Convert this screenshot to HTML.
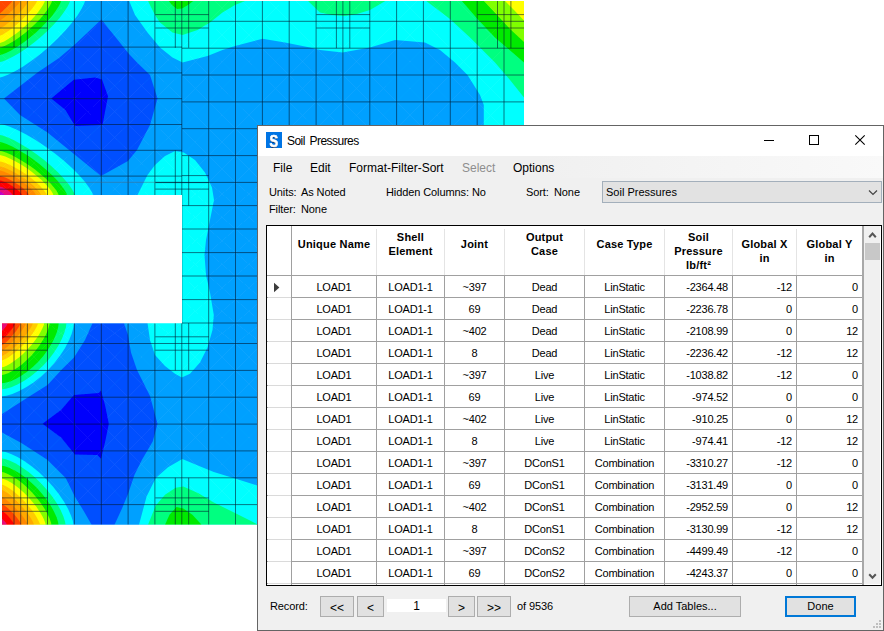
<!DOCTYPE html>
<html><head><meta charset="utf-8"><title>Soil Pressures</title>
<style>
html,body{margin:0;padding:0;background:#fff;}
body{width:884px;height:631px;position:relative;overflow:hidden;font-family:"Liberation Sans",sans-serif;color:#000;}
#dlg{position:absolute;left:257px;top:125px;width:625px;height:504px;border:1px solid #646464;background:#f0f0f0;}
#dlg *{box-sizing:border-box;}
#title{position:absolute;left:0;top:0;width:625px;height:30px;background:#fff;}
#icon{position:absolute;left:8px;top:6px;width:16px;height:16px;background:#0074e4;overflow:hidden;}
#icon span{position:absolute;left:0;top:1px;width:16px;height:18px;color:#fff;font-weight:bold;font-size:17px;line-height:18px;text-align:center;text-shadow:0 1.4px 0 #001a44;-webkit-text-stroke:0.7px #fff;transform:scaleX(0.76);transform-origin:7.4px 0;}
#ttext{position:absolute;left:29px;top:8px;font-size:12px;line-height:14px;letter-spacing:-0.55px;word-spacing:2px;white-space:nowrap;}
.wb{position:absolute;top:0;}
#menu{position:absolute;left:0;top:30px;width:625px;height:22px;background:linear-gradient(to right,#f0f0f0 0%,#f0f0f0 45%,#f9f9f9 100%);}
#menu span{position:absolute;top:5px;font-size:12px;line-height:14px;letter-spacing:0;white-space:nowrap;}
.lb{position:absolute;font-size:11px;line-height:13px;white-space:nowrap;letter-spacing:-0.1px;}
#combo{position:absolute;left:344px;top:55px;width:280px;height:22px;border:1px solid #a3afbb;background:#e2e2e2;}
#combo span{position:absolute;left:3px;top:4px;font-size:11px;line-height:13px;}
#tbl{position:absolute;left:8px;top:99px;width:616px;height:361px;border:1px solid #000;background:#fff;overflow:hidden;}
#tbl .hc{position:absolute;top:0;height:49px;text-align:center;font-weight:bold;font-size:11px;line-height:14px;letter-spacing:0.2px;}
#tbl .hv{position:absolute;top:3px;width:1px;height:46px;background:#e4e4e4;}
#tbl .v{position:absolute;top:49px;width:1px;height:310px;background:#a0a0a0;}
#tbl .v0{position:absolute;top:0;width:1px;height:359px;background:#a0a0a0;}
#tbl .hl{position:absolute;left:0;width:595px;height:1px;background:#a0a0a0;}
#tbl .hl2{position:absolute;left:1px;width:23px;height:1px;background:#dadada;}
#tbl .c{position:absolute;height:21px;font-size:11px;line-height:21px;white-space:nowrap;padding-top:1px;letter-spacing:-0.2px;}
#tbl .center{text-align:center;}
#tbl .right{text-align:right;padding-right:4px;}
#arrow{position:absolute;left:0;top:0;}
#sb{position:absolute;left:595px;top:0;width:19px;height:359px;background:#f0f0f0;border-left:2px solid #a8a8a8;}
.btn{position:absolute;height:21px;border:1px solid #adadad;background:#e1e1e1;font-size:11px;line-height:19px;text-align:center;}
.nav{font-size:12px;line-height:22px;}
</style></head><body>
<svg width="884" height="631" viewBox="0 0 884 631" style="position:absolute;left:0;top:0">
<defs><clipPath id="pc"><path d="M0,1 H524 V524.7 H2 V323.3 H182 V195 H0 Z"/></clipPath><filter id="bl" x="0" y="0" width="100%" height="100%" filterUnits="userSpaceOnUse"><feGaussianBlur stdDeviation="0.45"/></filter></defs>
<g clip-path="url(#pc)" filter="url(#bl)">
<rect x="0" y="0" width="530" height="530" fill="#00a0ff"/>
<polygon fill="#00ffff" points="0.0,1.0 85.0,1.0 84.2,3.6 81.7,8.6 77.8,14.9 72.4,22.2 65.8,30.0 58.2,38.0 49.9,45.9 41.1,53.4 32.2,60.2 23.5,66.2 15.5,71.0 8.4,74.6 2.9,76.8 0.0,77.5"/>
<polygon fill="#00ffff" points="0.0,195.0 93.0,195.0 92.1,192.5 89.4,187.9 85.1,182.0 79.2,175.3 72.0,168.0 63.7,160.6 54.6,153.2 45.0,146.2 35.2,139.8 25.7,134.3 16.9,129.8 9.2,126.5 3.2,124.4 0.0,123.8"/>
<polygon fill="#00ffff" points="2.0,323.3 74.0,323.3 73.4,327.6 71.7,333.8 68.8,340.8 64.9,348.2 60.1,355.6 54.4,363.0 48.0,370.0 41.1,376.4 33.9,382.2 26.5,387.1 19.2,391.1 12.4,393.9 6.3,395.7 2.0,396.3"/>
<polygon fill="#00ffff" points="2.0,524.7 73.5,524.7 72.9,521.1 71.0,515.5 68.0,508.8 63.9,501.5 58.8,494.0 52.9,486.5 46.3,479.3 39.3,472.5 31.9,466.4 24.6,461.2 17.5,457.0 11.0,453.9 5.5,452.0 2.0,451.4"/>
<polygon fill="#00ffff" points="128.8,0.0 135.0,15.0 147.5,32.5 160.0,47.5 172.5,57.5 182.5,62.5 207.5,56.0 222.5,50.0 235.0,46.0 262.5,38.8 285.0,42.5 310.0,47.5 320.0,50.0 342.5,52.5 370.0,47.5 395.0,40.0 425.0,42.5 440.0,50.0 455.0,62.5 467.5,75.0 480.0,95.0 483.8,105.0 483.8,135.0 524.0,135.0 524.0,0.0"/>
<polygon fill="#00ffff" points="137.5,195.0 147.5,175.0 155.0,165.0 165.0,156.0 175.0,151.0 183.8,152.5 195.0,160.0 205.0,172.5 212.0,187.5 214.0,200.0 210.0,220.0 206.0,240.0 204.5,255.0 206.0,275.0 210.0,292.5 213.8,315.0 212.5,330.0 207.5,347.5 200.0,362.5 190.0,373.8 181.8,377.5 175.0,373.8 165.0,366.0 155.0,355.0 150.0,340.0 147.5,323.0 147.5,300.0 137.5,220.0"/>
<polygon fill="#00ffff" points="139.0,524.7 146.6,496.4 155.8,478.0 168.0,467.3 182.3,459.0 198.5,465.8 213.8,472.0 238.2,479.6 258.0,485.7 270.0,489.0 270.0,524.7"/>
<polygon fill="#00ff80" points="0.0,1.0 70.0,1.0 69.3,3.1 67.3,7.0 64.0,12.1 59.6,17.9 54.2,24.1 47.9,30.5 41.1,36.8 33.8,42.8 26.5,48.2 19.4,53.0 12.7,56.8 6.9,59.7 2.4,61.4 0.0,62.0"/>
<polygon fill="#00ff80" points="0.0,195.0 74.8,195.0 74.1,192.9 71.9,189.1 68.4,184.1 63.7,178.4 57.9,172.3 51.2,166.0 43.9,159.8 36.2,153.9 28.3,148.6 20.7,143.9 13.6,140.1 7.4,137.3 2.6,135.6 0.0,135.0"/>
<polygon fill="#00ff80" points="2.0,323.3 66.4,323.3 65.9,327.2 64.3,332.8 61.8,339.1 58.3,345.8 54.0,352.5 48.9,359.2 43.2,365.5 37.0,371.3 30.5,376.5 23.9,381.0 17.4,384.6 11.3,387.2 5.8,388.8 2.0,389.3"/>
<polygon fill="#00ff80" points="2.0,524.7 65.6,524.7 65.0,521.5 63.4,516.4 60.7,510.3 57.1,503.8 52.6,497.0 47.3,490.2 41.4,483.7 35.1,477.6 28.6,472.1 22.1,467.4 15.8,463.6 10.0,460.8 5.1,459.1 2.0,458.5"/>
<polygon fill="#00ff80" points="147.5,0.0 155.0,15.0 160.0,22.5 172.5,32.5 182.5,35.0 197.5,30.0 210.0,22.5 222.5,12.5 235.0,5.0 247.5,0.0"/>
<polygon fill="#00ff80" points="307.0,0.0 320.0,12.5 332.0,15.0 345.0,16.0 357.0,14.0 370.0,10.0 387.0,0.0"/>
<polygon fill="#00ff80" points="425.0,0.0 450.0,19.0 470.0,37.5 495.0,62.5 510.0,80.0 524.0,97.5 524.0,0.0"/>
<polygon fill="#00ff80" points="148.0,524.7 155.8,505.5 165.0,494.8 175.6,487.8 183.3,486.6 198.5,493.3 213.8,502.5 232.0,511.6 250.5,520.8 258.0,524.7"/>
<polygon fill="#00ea00" points="0.0,1.0 61.0,1.0 60.4,2.9 58.7,6.3 55.8,10.8 52.0,15.9 47.2,21.5 41.8,27.1 35.8,32.7 29.5,38.0 23.1,42.8 16.9,47.0 11.1,50.4 6.0,52.9 2.1,54.5 0.0,55.0"/>
<polygon fill="#00ea00" points="0.0,195.0 67.0,195.0 66.4,193.2 64.4,189.7 61.3,185.4 57.1,180.3 51.9,174.9 45.9,169.4 39.3,163.9 32.4,158.7 25.4,154.0 18.5,149.9 12.2,146.5 6.6,144.0 2.3,142.5 0.0,142.0"/>
<polygon fill="#00ea00" points="2.0,323.3 58.7,323.3 58.2,326.9 56.9,331.9 54.6,337.7 51.6,343.7 47.7,349.9 43.3,355.9 38.3,361.7 32.8,367.0 27.1,371.7 21.3,375.7 15.6,379.0 10.2,381.4 5.4,382.8 2.0,383.3"/>
<polygon fill="#00ea00" points="2.0,524.7 58.5,524.7 58.0,521.8 56.6,517.3 54.2,511.9 50.9,506.1 46.9,500.0 42.2,493.9 37.0,488.1 31.4,482.7 25.7,477.8 19.9,473.6 14.3,470.2 9.1,467.7 4.8,466.2 2.0,465.7"/>
<polygon fill="#00ea00" points="168.0,0.0 172.0,5.0 177.0,9.0 182.0,8.5 188.0,5.0 194.5,0.0"/>
<polygon fill="#00ea00" points="461.0,0.0 477.5,19.0 495.0,37.5 512.5,52.5 524.0,62.5 524.0,0.0"/>
<polygon fill="#00ea00" points="165.0,524.7 169.5,514.7 176.5,507.0 183.3,508.6 192.4,514.7 201.6,524.7"/>
<polygon fill="#80ff00" points="0.0,1.0 52.0,1.0 51.5,2.6 50.0,5.6 47.6,9.5 44.3,13.9 40.3,18.7 35.6,23.5 30.5,28.3 25.1,32.9 19.7,37.1 14.4,40.7 9.5,43.6 5.2,45.8 1.8,47.1 0.0,47.6"/>
<polygon fill="#80ff00" points="0.0,195.0 58.6,195.0 58.0,193.5 56.4,190.6 53.6,187.0 49.9,182.8 45.4,178.3 40.1,173.7 34.4,169.1 28.3,164.8 22.2,160.9 16.2,157.4 10.7,154.6 5.8,152.6 2.0,151.3 0.0,150.9"/>
<polygon fill="#80ff00" points="2.0,323.3 49.6,323.3 49.2,325.8 48.0,329.8 46.0,334.5 43.2,339.6 39.8,345.0 35.9,350.2 31.5,355.4 26.8,360.1 21.9,364.4 17.0,368.1 12.3,371.0 8.0,373.2 4.3,374.6 2.0,375.0"/>
<polygon fill="#80ff00" points="2.0,524.7 51.4,524.7 51.0,522.4 49.6,518.5 47.5,513.9 44.6,508.7 40.9,503.3 36.8,497.9 32.1,492.6 27.2,487.6 22.1,483.1 17.0,479.3 12.1,476.2 7.8,473.9 4.2,472.5 2.0,472.0"/>
<polygon fill="#80ff00" points="483.0,0.0 497.0,15.0 510.0,29.0 524.0,42.0 524.0,0.0"/>
<polygon fill="#ffff00" points="0.0,1.0 44.8,1.0 44.4,2.3 43.0,4.9 40.9,8.3 38.0,12.3 34.5,16.5 30.4,21.0 26.0,25.3 21.3,29.5 16.6,33.3 12.0,36.6 7.8,39.3 4.2,41.4 1.4,42.6 0.0,43.0"/>
<polygon fill="#ffff00" points="0.0,195.0 53.3,195.0 52.8,193.6 51.3,191.0 48.8,187.7 45.4,183.9 41.3,179.8 36.5,175.7 31.3,171.5 25.8,167.6 20.2,164.0 14.8,160.9 9.7,158.4 5.3,156.5 1.8,155.4 0.0,155.0"/>
<polygon fill="#ffff00" points="2.0,323.3 44.2,323.3 43.8,325.0 42.6,328.0 40.7,331.8 38.2,336.1 35.0,340.6 31.3,345.2 27.3,349.6 23.0,353.9 18.6,357.7 14.2,361.0 10.2,363.7 6.6,365.7 3.6,366.9 2.0,367.3"/>
<polygon fill="#ffff00" points="2.0,524.7 45.7,524.7 45.3,522.9 44.1,519.7 42.1,515.7 39.4,511.3 36.2,506.6 32.3,501.8 28.2,497.1 23.7,492.6 19.2,488.6 14.7,485.1 10.5,482.3 6.7,480.2 3.7,478.9 2.0,478.5"/>
<polygon fill="#ffff00" points="504.0,0.0 514.0,10.0 524.0,20.5 524.0,0.0"/>
<polygon fill="#ffcc00" points="0.0,1.0 37.0,1.0 36.6,2.0 35.5,4.0 33.7,6.6 31.2,9.8 28.2,13.3 24.7,17.0 21.0,20.7 17.1,24.2 13.1,27.4 9.4,30.2 6.0,32.6 3.2,34.3 1.0,35.3 0.0,35.7"/>
<polygon fill="#ffcc00" points="0.0,195.0 46.8,195.0 46.3,193.8 45.0,191.7 42.8,188.9 39.9,185.7 36.2,182.3 32.0,178.8 27.5,175.3 22.6,172.1 17.7,169.1 13.0,166.5 8.5,164.3 4.6,162.8 1.6,161.8 0.0,161.5"/>
<polygon fill="#ffcc00" points="2.0,323.3 38.0,323.3 37.7,324.6 36.6,327.0 34.9,330.0 32.7,333.5 29.9,337.3 26.7,341.2 23.1,345.0 19.4,348.6 15.6,351.9 12.0,354.8 8.5,357.2 5.6,358.9 3.2,359.9 2.0,360.3"/>
<polygon fill="#ffcc00" points="2.0,524.7 40.0,524.7 39.6,523.3 38.5,520.7 36.8,517.4 34.4,513.6 31.4,509.5 28.0,505.4 24.3,501.2 20.4,497.3 16.4,493.7 12.5,490.6 8.9,488.1 5.8,486.2 3.3,485.1 2.0,484.7"/>
<polygon fill="#ffa800" points="0.0,1.0 28.5,1.0 28.2,1.7 27.3,3.2 25.8,5.2 23.9,7.7 21.5,10.4 18.8,13.3 15.8,16.3 12.8,19.1 9.8,21.7 6.9,24.0 4.4,25.9 2.2,27.3 0.7,28.2 0.0,28.5"/>
<polygon fill="#ffa800" points="0.0,195.0 41.0,195.0 40.6,194.0 39.4,192.2 37.5,189.8 34.9,187.1 31.7,184.2 28.1,181.2 24.1,178.3 19.8,175.5 15.5,172.9 11.3,170.7 7.5,168.9 4.1,167.6 1.4,166.8 0.0,166.5"/>
<polygon fill="#ffa800" points="2.0,323.3 32.8,323.3 32.5,324.3 31.6,326.2 30.1,328.8 28.1,331.9 25.6,335.2 22.8,338.6 19.7,342.0 16.5,345.3 13.2,348.3 10.1,350.9 7.2,353.0 4.8,354.6 2.9,355.6 2.0,355.9"/>
<polygon fill="#ffa800" points="2.0,524.7 34.0,524.7 33.7,523.7 32.7,521.6 31.2,518.8 29.1,515.6 26.5,512.1 23.6,508.4 20.4,504.8 17.0,501.3 13.7,498.1 10.4,495.3 7.4,493.1 4.9,491.4 3.0,490.3 2.0,490.0"/>
<polygon fill="#ff8800" points="0.0,1.0 20.5,1.0 20.3,1.4 19.6,2.3 18.5,3.7 17.0,5.4 15.2,7.3 13.2,9.4 11.0,11.5 8.8,13.6 6.6,15.5 4.6,17.2 2.8,18.6 1.4,19.6 0.4,20.3 0.0,20.5"/>
<polygon fill="#ff8800" points="0.0,195.0 35.8,195.0 35.5,194.2 34.4,192.6 32.8,190.6 30.5,188.2 27.7,185.8 24.5,183.2 21.0,180.7 17.3,178.3 13.6,176.1 9.9,174.2 6.5,172.7 3.5,171.5 1.2,170.8 0.0,170.6"/>
<polygon fill="#ff8800" points="2.0,323.3 26.0,323.3 25.7,324.0 25.0,325.5 23.8,327.6 22.2,330.1 20.2,332.8 17.9,335.7 15.5,338.6 12.9,341.3 10.4,343.9 8.0,346.2 5.8,348.0 4.0,349.4 2.6,350.2 2.0,350.5"/>
<polygon fill="#ff8800" points="2.0,524.7 27.8,524.7 27.5,524.0 26.7,522.4 25.4,520.3 23.7,517.8 21.6,515.0 19.1,512.1 16.5,509.2 13.7,506.3 11.0,503.7 8.4,501.4 6.1,499.5 4.1,498.1 2.7,497.3 2.0,497.0"/>
<polygon fill="#ff4400" points="0.0,1.0 12.4,1.0 12.3,1.2 11.8,1.7 11.1,2.5 10.2,3.5 9.0,4.7 7.8,6.0 6.4,7.4 5.0,8.8 3.7,10.0 2.5,11.2 1.5,12.1 0.7,12.8 0.2,13.3 0.0,13.4"/>
<polygon fill="#ff4400" points="0.0,195.0 29.0,195.0 28.7,194.3 27.9,193.1 26.5,191.5 24.7,189.7 22.5,187.8 19.9,185.8 17.0,183.9 14.0,182.0 11.0,180.3 8.0,178.8 5.3,177.6 2.9,176.7 1.0,176.2 0.0,176.0"/>
<polygon fill="#ff4400" points="2.0,323.3 20.6,323.3 20.4,323.9 19.8,325.1 18.9,326.8 17.6,328.7 16.1,331.0 14.3,333.3 12.4,335.6 10.5,337.8 8.5,339.9 6.6,341.7 4.9,343.2 3.5,344.3 2.5,345.0 2.0,345.2"/>
<polygon fill="#ff4400" points="2.0,524.7 21.4,524.7 21.2,524.2 20.6,523.0 19.6,521.4 18.3,519.6 16.7,517.5 14.9,515.3 12.9,513.1 10.8,511.0 8.8,509.0 6.8,507.3 5.1,505.9 3.6,504.9 2.5,504.2 2.0,504.0"/>
<polygon fill="#ff0000" points="0.0,195.0 22.0,195.0 21.8,194.5 21.2,193.6 20.1,192.4 18.7,191.0 17.0,189.5 15.1,188.0 12.9,186.5 10.6,185.1 8.3,183.8 6.1,182.6 4.0,181.7 2.2,181.1 0.8,180.6 0.0,180.5"/>
<polygon fill="#ff0000" points="2.0,323.3 15.3,323.3 15.2,323.7 14.7,324.6 14.1,325.8 13.2,327.2 12.1,328.8 10.8,330.5 9.5,332.2 8.1,333.8 6.6,335.3 5.3,336.6 4.1,337.7 3.1,338.4 2.3,338.9 2.0,339.1"/>
<polygon fill="#ff0000" points="2.0,524.7 14.3,524.7 14.2,524.3 13.8,523.6 13.2,522.5 12.3,521.3 11.3,519.9 10.2,518.5 8.9,517.0 7.6,515.6 6.3,514.3 5.1,513.2 3.9,512.3 3.0,511.6 2.3,511.1 2.0,511.0"/>
<polygon fill="#e8107a" points="0.0,195.0 12.6,195.0 12.5,194.7 12.1,194.2 11.5,193.5 10.7,192.7 9.8,191.8 8.6,190.9 7.4,190.1 6.1,189.2 4.8,188.5 3.5,187.8 2.3,187.3 1.2,186.9 0.4,186.7 0.0,186.6"/>
<polygon fill="#e8107a" points="2.0,323.3 7.7,323.3 7.6,323.5 7.5,323.9 7.2,324.5 6.8,325.2 6.3,325.9 5.8,326.7 5.2,327.5 4.6,328.3 4.0,329.0 3.4,329.6 2.9,330.1 2.5,330.5 2.1,330.7 2.0,330.8"/>
<polygon fill="#e8107a" points="2.0,524.7 7.0,524.7 6.9,524.6 6.8,524.2 6.5,523.8 6.2,523.3 5.8,522.7 5.3,522.1 4.8,521.5 4.3,520.9 3.7,520.4 3.2,519.9 2.8,519.5 2.4,519.2 2.1,519.1 2.0,519.0"/>
<polygon fill="#c000c8" points="0.0,195.0 4.6,195.0 4.6,194.9 4.4,194.7 4.2,194.4 3.9,194.1 3.6,193.7 3.2,193.4 2.7,193.0 2.2,192.7 1.7,192.4 1.3,192.1 0.8,191.9 0.5,191.7 0.2,191.6 0.0,191.6"/>
<polygon fill="#0050ff" points="4.0,98.4 37.5,72.6 59.0,58.0 74.3,45.0 101.4,19.5 129.0,54.0 137.0,62.5 150.0,75.0 157.5,98.4 150.0,125.0 137.0,150.0 128.0,161.0 101.0,176.0 74.0,154.0 47.5,132.5 20.0,115.0"/>
<polygon fill="#0050ff" points="2.0,414.0 30.0,396.0 47.5,385.0 62.5,368.8 74.0,357.5 85.0,340.0 92.5,323.3 124.0,323.3 128.0,335.0 131.0,352.5 137.0,370.0 150.0,396.0 157.5,423.8 152.7,441.4 142.0,459.7 134.4,475.0 128.3,493.3 122.0,508.6 114.5,524.7 91.6,524.7 84.0,511.6 74.8,496.4 65.7,478.0 47.3,459.7 21.4,443.0 2.0,432.5"/>
<polygon fill="#0000fc" points="51.3,98.4 73.8,79.8 95.0,77.6 102.0,79.5 108.0,96.3 102.5,125.0 75.0,126.0 65.5,110.0"/>
<polygon fill="#0000fc" points="42.5,423.8 61.0,410.0 74.0,395.0 98.8,393.0 101.0,390.5 105.0,405.0 108.8,423.8 105.0,442.5 101.0,458.8 97.5,455.0 75.0,454.5 61.0,437.5"/>
<g stroke="#ffffff" stroke-opacity="0.045" stroke-width="1" fill="none">
<path d="M-6.2 -4.5 L20.7 21.3 M20.7 -4.5 L-6.2 21.3"/>
<path d="M-6.2 21.3 L20.7 47.1 M20.7 21.3 L-6.2 47.1"/>
<path d="M-6.2 47.1 L20.7 72.9 M20.7 47.1 L-6.2 72.9"/>
<path d="M-6.2 72.9 L20.7 98.7 M20.7 72.9 L-6.2 98.7"/>
<path d="M-6.2 98.7 L20.7 124.5 M20.7 98.7 L-6.2 124.5"/>
<path d="M-6.2 124.5 L20.7 150.3 M20.7 124.5 L-6.2 150.3"/>
<path d="M-6.2 150.3 L20.7 176.1 M20.7 150.3 L-6.2 176.1"/>
<path d="M-6.2 176.1 L20.7 201.9 M20.7 176.1 L-6.2 201.9"/>
<path d="M20.7 -4.5 L47.5 21.3 M47.5 -4.5 L20.7 21.3"/>
<path d="M20.7 21.3 L47.5 47.1 M47.5 21.3 L20.7 47.1"/>
<path d="M20.7 47.1 L47.5 72.9 M47.5 47.1 L20.7 72.9"/>
<path d="M20.7 72.9 L47.5 98.7 M47.5 72.9 L20.7 98.7"/>
<path d="M20.7 98.7 L47.5 124.5 M47.5 98.7 L20.7 124.5"/>
<path d="M20.7 124.5 L47.5 150.3 M47.5 124.5 L20.7 150.3"/>
<path d="M20.7 150.3 L47.5 176.1 M47.5 150.3 L20.7 176.1"/>
<path d="M20.7 176.1 L47.5 201.9 M47.5 176.1 L20.7 201.9"/>
<path d="M47.5 -4.5 L74.4 21.3 M74.4 -4.5 L47.5 21.3"/>
<path d="M47.5 21.3 L74.4 47.1 M74.4 21.3 L47.5 47.1"/>
<path d="M47.5 47.1 L74.4 72.9 M74.4 47.1 L47.5 72.9"/>
<path d="M47.5 72.9 L74.4 98.7 M74.4 72.9 L47.5 98.7"/>
<path d="M47.5 98.7 L74.4 124.5 M74.4 98.7 L47.5 124.5"/>
<path d="M47.5 124.5 L74.4 150.3 M74.4 124.5 L47.5 150.3"/>
<path d="M47.5 150.3 L74.4 176.1 M74.4 150.3 L47.5 176.1"/>
<path d="M47.5 176.1 L74.4 201.9 M74.4 176.1 L47.5 201.9"/>
<path d="M74.4 -4.5 L101.3 21.3 M101.3 -4.5 L74.4 21.3"/>
<path d="M74.4 21.3 L101.3 47.1 M101.3 21.3 L74.4 47.1"/>
<path d="M74.4 47.1 L101.3 72.9 M101.3 47.1 L74.4 72.9"/>
<path d="M74.4 72.9 L101.3 98.7 M101.3 72.9 L74.4 98.7"/>
<path d="M74.4 98.7 L101.3 124.5 M101.3 98.7 L74.4 124.5"/>
<path d="M74.4 124.5 L101.3 150.3 M101.3 124.5 L74.4 150.3"/>
<path d="M74.4 150.3 L101.3 176.1 M101.3 150.3 L74.4 176.1"/>
<path d="M74.4 176.1 L101.3 201.9 M101.3 176.1 L74.4 201.9"/>
<path d="M101.3 -4.5 L128.1 21.3 M128.1 -4.5 L101.3 21.3"/>
<path d="M101.3 21.3 L128.1 47.1 M128.1 21.3 L101.3 47.1"/>
<path d="M101.3 47.1 L128.1 72.9 M128.1 47.1 L101.3 72.9"/>
<path d="M101.3 72.9 L128.1 98.7 M128.1 72.9 L101.3 98.7"/>
<path d="M101.3 98.7 L128.1 124.5 M128.1 98.7 L101.3 124.5"/>
<path d="M101.3 124.5 L128.1 150.3 M128.1 124.5 L101.3 150.3"/>
<path d="M101.3 150.3 L128.1 176.1 M128.1 150.3 L101.3 176.1"/>
<path d="M101.3 176.1 L128.1 201.9 M128.1 176.1 L101.3 201.9"/>
<path d="M128.1 -4.5 L154.9 21.3 M154.9 -4.5 L128.1 21.3"/>
<path d="M128.1 21.3 L154.9 47.1 M154.9 21.3 L128.1 47.1"/>
<path d="M128.1 47.1 L154.9 72.9 M154.9 47.1 L128.1 72.9"/>
<path d="M128.1 72.9 L154.9 98.7 M154.9 72.9 L128.1 98.7"/>
<path d="M128.1 98.7 L154.9 124.5 M154.9 98.7 L128.1 124.5"/>
<path d="M128.1 124.5 L154.9 150.3 M154.9 124.5 L128.1 150.3"/>
<path d="M128.1 150.3 L154.9 176.1 M154.9 150.3 L128.1 176.1"/>
<path d="M128.1 176.1 L154.9 201.9 M154.9 176.1 L128.1 201.9"/>
<path d="M154.9 -4.5 L181.8 21.3 M181.8 -4.5 L154.9 21.3"/>
<path d="M154.9 21.3 L181.8 47.1 M181.8 21.3 L154.9 47.1"/>
<path d="M154.9 47.1 L181.8 72.9 M181.8 47.1 L154.9 72.9"/>
<path d="M154.9 72.9 L181.8 98.7 M181.8 72.9 L154.9 98.7"/>
<path d="M154.9 98.7 L181.8 124.5 M181.8 98.7 L154.9 124.5"/>
<path d="M154.9 124.5 L181.8 150.3 M181.8 124.5 L154.9 150.3"/>
<path d="M154.9 150.3 L181.8 176.1 M181.8 150.3 L154.9 176.1"/>
<path d="M154.9 176.1 L181.8 201.9 M181.8 176.1 L154.9 201.9"/>
<path d="M181.8 -5.6 L208.7 21.3 M208.7 -5.6 L181.8 21.3"/>
<path d="M181.8 21.3 L208.7 48.2 M208.7 21.3 L181.8 48.2"/>
<path d="M181.8 48.2 L208.7 75.0 M208.7 48.2 L181.8 75.0"/>
<path d="M181.8 75.0 L208.7 101.9 M208.7 75.0 L181.8 101.9"/>
<path d="M181.8 101.9 L208.7 128.7 M208.7 101.9 L181.8 128.7"/>
<path d="M181.8 128.7 L208.7 155.6 M208.7 128.7 L181.8 155.6"/>
<path d="M181.8 155.6 L208.7 182.4 M208.7 155.6 L181.8 182.4"/>
<path d="M181.8 182.4 L208.7 205.6 M208.7 182.4 L181.8 205.6"/>
<path d="M181.8 205.6 L208.7 229.0 M208.7 205.6 L181.8 229.0"/>
<path d="M181.8 229.0 L208.7 252.6 M208.7 229.0 L181.8 252.6"/>
<path d="M181.8 252.6 L208.7 276.0 M208.7 252.6 L181.8 276.0"/>
<path d="M181.8 276.0 L208.7 299.6 M208.7 276.0 L181.8 299.6"/>
<path d="M181.8 299.6 L208.7 323.0 M208.7 299.6 L181.8 323.0"/>
<path d="M181.8 323.0 L208.7 343.5 M208.7 323.0 L181.8 343.5"/>
<path d="M181.8 343.5 L208.7 370.4 M208.7 343.5 L181.8 370.4"/>
<path d="M181.8 370.4 L208.7 397.2 M208.7 370.4 L181.8 397.2"/>
<path d="M181.8 397.2 L208.7 424.1 M208.7 397.2 L181.8 424.1"/>
<path d="M181.8 424.1 L208.7 450.9 M208.7 424.1 L181.8 450.9"/>
<path d="M181.8 450.9 L208.7 477.8 M208.7 450.9 L181.8 477.8"/>
<path d="M181.8 477.8 L208.7 504.6 M208.7 477.8 L181.8 504.6"/>
<path d="M208.7 -5.6 L235.5 21.3 M235.5 -5.6 L208.7 21.3"/>
<path d="M208.7 21.3 L235.5 48.2 M235.5 21.3 L208.7 48.2"/>
<path d="M208.7 48.2 L235.5 75.0 M235.5 48.2 L208.7 75.0"/>
<path d="M208.7 75.0 L235.5 101.9 M235.5 75.0 L208.7 101.9"/>
<path d="M208.7 101.9 L235.5 128.7 M235.5 101.9 L208.7 128.7"/>
<path d="M208.7 128.7 L235.5 155.6 M235.5 128.7 L208.7 155.6"/>
<path d="M208.7 155.6 L235.5 182.4 M235.5 155.6 L208.7 182.4"/>
<path d="M208.7 182.4 L235.5 205.6 M235.5 182.4 L208.7 205.6"/>
<path d="M208.7 205.6 L235.5 229.0 M235.5 205.6 L208.7 229.0"/>
<path d="M208.7 229.0 L235.5 252.6 M235.5 229.0 L208.7 252.6"/>
<path d="M208.7 252.6 L235.5 276.0 M235.5 252.6 L208.7 276.0"/>
<path d="M208.7 276.0 L235.5 299.6 M235.5 276.0 L208.7 299.6"/>
<path d="M208.7 299.6 L235.5 323.0 M235.5 299.6 L208.7 323.0"/>
<path d="M208.7 323.0 L235.5 343.5 M235.5 323.0 L208.7 343.5"/>
<path d="M208.7 343.5 L235.5 370.4 M235.5 343.5 L208.7 370.4"/>
<path d="M208.7 370.4 L235.5 397.2 M235.5 370.4 L208.7 397.2"/>
<path d="M208.7 397.2 L235.5 424.1 M235.5 397.2 L208.7 424.1"/>
<path d="M208.7 424.1 L235.5 450.9 M235.5 424.1 L208.7 450.9"/>
<path d="M208.7 450.9 L235.5 477.8 M235.5 450.9 L208.7 477.8"/>
<path d="M208.7 477.8 L235.5 504.6 M235.5 477.8 L208.7 504.6"/>
<path d="M235.5 -5.6 L262.4 21.3 M262.4 -5.6 L235.5 21.3"/>
<path d="M235.5 21.3 L262.4 48.2 M262.4 21.3 L235.5 48.2"/>
<path d="M235.5 48.2 L262.4 75.0 M262.4 48.2 L235.5 75.0"/>
<path d="M235.5 75.0 L262.4 101.9 M262.4 75.0 L235.5 101.9"/>
<path d="M235.5 101.9 L262.4 128.7 M262.4 101.9 L235.5 128.7"/>
<path d="M235.5 128.7 L262.4 155.6 M262.4 128.7 L235.5 155.6"/>
<path d="M235.5 155.6 L262.4 182.4 M262.4 155.6 L235.5 182.4"/>
<path d="M235.5 182.4 L262.4 205.6 M262.4 182.4 L235.5 205.6"/>
<path d="M235.5 205.6 L262.4 229.0 M262.4 205.6 L235.5 229.0"/>
<path d="M235.5 229.0 L262.4 252.6 M262.4 229.0 L235.5 252.6"/>
<path d="M235.5 252.6 L262.4 276.0 M262.4 252.6 L235.5 276.0"/>
<path d="M235.5 276.0 L262.4 299.6 M262.4 276.0 L235.5 299.6"/>
<path d="M235.5 299.6 L262.4 323.0 M262.4 299.6 L235.5 323.0"/>
<path d="M235.5 323.0 L262.4 343.5 M262.4 323.0 L235.5 343.5"/>
<path d="M235.5 343.5 L262.4 370.4 M262.4 343.5 L235.5 370.4"/>
<path d="M235.5 370.4 L262.4 397.2 M262.4 370.4 L235.5 397.2"/>
<path d="M235.5 397.2 L262.4 424.1 M262.4 397.2 L235.5 424.1"/>
<path d="M235.5 424.1 L262.4 450.9 M262.4 424.1 L235.5 450.9"/>
<path d="M235.5 450.9 L262.4 477.8 M262.4 450.9 L235.5 477.8"/>
<path d="M235.5 477.8 L262.4 504.6 M262.4 477.8 L235.5 504.6"/>
<path d="M262.4 -5.6 L289.2 21.3 M289.2 -5.6 L262.4 21.3"/>
<path d="M262.4 21.3 L289.2 48.2 M289.2 21.3 L262.4 48.2"/>
<path d="M262.4 48.2 L289.2 75.0 M289.2 48.2 L262.4 75.0"/>
<path d="M262.4 75.0 L289.2 101.9 M289.2 75.0 L262.4 101.9"/>
<path d="M262.4 101.9 L289.2 128.7 M289.2 101.9 L262.4 128.7"/>
<path d="M262.4 128.7 L289.2 155.6 M289.2 128.7 L262.4 155.6"/>
<path d="M262.4 155.6 L289.2 182.4 M289.2 155.6 L262.4 182.4"/>
<path d="M262.4 182.4 L289.2 205.6 M289.2 182.4 L262.4 205.6"/>
<path d="M262.4 205.6 L289.2 229.0 M289.2 205.6 L262.4 229.0"/>
<path d="M262.4 229.0 L289.2 252.6 M289.2 229.0 L262.4 252.6"/>
<path d="M262.4 252.6 L289.2 276.0 M289.2 252.6 L262.4 276.0"/>
<path d="M262.4 276.0 L289.2 299.6 M289.2 276.0 L262.4 299.6"/>
<path d="M262.4 299.6 L289.2 323.0 M289.2 299.6 L262.4 323.0"/>
<path d="M262.4 323.0 L289.2 343.5 M289.2 323.0 L262.4 343.5"/>
<path d="M262.4 343.5 L289.2 370.4 M289.2 343.5 L262.4 370.4"/>
<path d="M262.4 370.4 L289.2 397.2 M289.2 370.4 L262.4 397.2"/>
<path d="M262.4 397.2 L289.2 424.1 M289.2 397.2 L262.4 424.1"/>
<path d="M262.4 424.1 L289.2 450.9 M289.2 424.1 L262.4 450.9"/>
<path d="M262.4 450.9 L289.2 477.8 M289.2 450.9 L262.4 477.8"/>
<path d="M262.4 477.8 L289.2 504.6 M289.2 477.8 L262.4 504.6"/>
<path d="M289.2 -5.6 L316.1 21.3 M316.1 -5.6 L289.2 21.3"/>
<path d="M289.2 21.3 L316.1 48.2 M316.1 21.3 L289.2 48.2"/>
<path d="M289.2 48.2 L316.1 75.0 M316.1 48.2 L289.2 75.0"/>
<path d="M289.2 75.0 L316.1 101.9 M316.1 75.0 L289.2 101.9"/>
<path d="M289.2 101.9 L316.1 128.7 M316.1 101.9 L289.2 128.7"/>
<path d="M289.2 128.7 L316.1 155.6 M316.1 128.7 L289.2 155.6"/>
<path d="M289.2 155.6 L316.1 182.4 M316.1 155.6 L289.2 182.4"/>
<path d="M289.2 182.4 L316.1 205.6 M316.1 182.4 L289.2 205.6"/>
<path d="M289.2 205.6 L316.1 229.0 M316.1 205.6 L289.2 229.0"/>
<path d="M289.2 229.0 L316.1 252.6 M316.1 229.0 L289.2 252.6"/>
<path d="M289.2 252.6 L316.1 276.0 M316.1 252.6 L289.2 276.0"/>
<path d="M289.2 276.0 L316.1 299.6 M316.1 276.0 L289.2 299.6"/>
<path d="M289.2 299.6 L316.1 323.0 M316.1 299.6 L289.2 323.0"/>
<path d="M289.2 323.0 L316.1 343.5 M316.1 323.0 L289.2 343.5"/>
<path d="M289.2 343.5 L316.1 370.4 M316.1 343.5 L289.2 370.4"/>
<path d="M289.2 370.4 L316.1 397.2 M316.1 370.4 L289.2 397.2"/>
<path d="M289.2 397.2 L316.1 424.1 M316.1 397.2 L289.2 424.1"/>
<path d="M289.2 424.1 L316.1 450.9 M316.1 424.1 L289.2 450.9"/>
<path d="M289.2 450.9 L316.1 477.8 M316.1 450.9 L289.2 477.8"/>
<path d="M289.2 477.8 L316.1 504.6 M316.1 477.8 L289.2 504.6"/>
<path d="M316.1 -5.6 L342.9 21.3 M342.9 -5.6 L316.1 21.3"/>
<path d="M316.1 21.3 L342.9 48.2 M342.9 21.3 L316.1 48.2"/>
<path d="M316.1 48.2 L342.9 75.0 M342.9 48.2 L316.1 75.0"/>
<path d="M316.1 75.0 L342.9 101.9 M342.9 75.0 L316.1 101.9"/>
<path d="M316.1 101.9 L342.9 128.7 M342.9 101.9 L316.1 128.7"/>
<path d="M316.1 128.7 L342.9 155.6 M342.9 128.7 L316.1 155.6"/>
<path d="M316.1 155.6 L342.9 182.4 M342.9 155.6 L316.1 182.4"/>
<path d="M316.1 182.4 L342.9 205.6 M342.9 182.4 L316.1 205.6"/>
<path d="M316.1 205.6 L342.9 229.0 M342.9 205.6 L316.1 229.0"/>
<path d="M316.1 229.0 L342.9 252.6 M342.9 229.0 L316.1 252.6"/>
<path d="M316.1 252.6 L342.9 276.0 M342.9 252.6 L316.1 276.0"/>
<path d="M316.1 276.0 L342.9 299.6 M342.9 276.0 L316.1 299.6"/>
<path d="M316.1 299.6 L342.9 323.0 M342.9 299.6 L316.1 323.0"/>
<path d="M316.1 323.0 L342.9 343.5 M342.9 323.0 L316.1 343.5"/>
<path d="M316.1 343.5 L342.9 370.4 M342.9 343.5 L316.1 370.4"/>
<path d="M316.1 370.4 L342.9 397.2 M342.9 370.4 L316.1 397.2"/>
<path d="M316.1 397.2 L342.9 424.1 M342.9 397.2 L316.1 424.1"/>
<path d="M316.1 424.1 L342.9 450.9 M342.9 424.1 L316.1 450.9"/>
<path d="M316.1 450.9 L342.9 477.8 M342.9 450.9 L316.1 477.8"/>
<path d="M316.1 477.8 L342.9 504.6 M342.9 477.8 L316.1 504.6"/>
<path d="M342.9 -5.6 L369.8 21.3 M369.8 -5.6 L342.9 21.3"/>
<path d="M342.9 21.3 L369.8 48.2 M369.8 21.3 L342.9 48.2"/>
<path d="M342.9 48.2 L369.8 75.0 M369.8 48.2 L342.9 75.0"/>
<path d="M342.9 75.0 L369.8 101.9 M369.8 75.0 L342.9 101.9"/>
<path d="M342.9 101.9 L369.8 128.7 M369.8 101.9 L342.9 128.7"/>
<path d="M342.9 128.7 L369.8 155.6 M369.8 128.7 L342.9 155.6"/>
<path d="M342.9 155.6 L369.8 182.4 M369.8 155.6 L342.9 182.4"/>
<path d="M342.9 182.4 L369.8 205.6 M369.8 182.4 L342.9 205.6"/>
<path d="M342.9 205.6 L369.8 229.0 M369.8 205.6 L342.9 229.0"/>
<path d="M342.9 229.0 L369.8 252.6 M369.8 229.0 L342.9 252.6"/>
<path d="M342.9 252.6 L369.8 276.0 M369.8 252.6 L342.9 276.0"/>
<path d="M342.9 276.0 L369.8 299.6 M369.8 276.0 L342.9 299.6"/>
<path d="M342.9 299.6 L369.8 323.0 M369.8 299.6 L342.9 323.0"/>
<path d="M342.9 323.0 L369.8 343.5 M369.8 323.0 L342.9 343.5"/>
<path d="M342.9 343.5 L369.8 370.4 M369.8 343.5 L342.9 370.4"/>
<path d="M342.9 370.4 L369.8 397.2 M369.8 370.4 L342.9 397.2"/>
<path d="M342.9 397.2 L369.8 424.1 M369.8 397.2 L342.9 424.1"/>
<path d="M342.9 424.1 L369.8 450.9 M369.8 424.1 L342.9 450.9"/>
<path d="M342.9 450.9 L369.8 477.8 M369.8 450.9 L342.9 477.8"/>
<path d="M342.9 477.8 L369.8 504.6 M369.8 477.8 L342.9 504.6"/>
<path d="M369.8 -5.6 L396.6 21.3 M396.6 -5.6 L369.8 21.3"/>
<path d="M369.8 21.3 L396.6 48.2 M396.6 21.3 L369.8 48.2"/>
<path d="M369.8 48.2 L396.6 75.0 M396.6 48.2 L369.8 75.0"/>
<path d="M369.8 75.0 L396.6 101.9 M396.6 75.0 L369.8 101.9"/>
<path d="M369.8 101.9 L396.6 128.7 M396.6 101.9 L369.8 128.7"/>
<path d="M369.8 128.7 L396.6 155.6 M396.6 128.7 L369.8 155.6"/>
<path d="M369.8 155.6 L396.6 182.4 M396.6 155.6 L369.8 182.4"/>
<path d="M369.8 182.4 L396.6 205.6 M396.6 182.4 L369.8 205.6"/>
<path d="M369.8 205.6 L396.6 229.0 M396.6 205.6 L369.8 229.0"/>
<path d="M369.8 229.0 L396.6 252.6 M396.6 229.0 L369.8 252.6"/>
<path d="M369.8 252.6 L396.6 276.0 M396.6 252.6 L369.8 276.0"/>
<path d="M369.8 276.0 L396.6 299.6 M396.6 276.0 L369.8 299.6"/>
<path d="M369.8 299.6 L396.6 323.0 M396.6 299.6 L369.8 323.0"/>
<path d="M369.8 323.0 L396.6 343.5 M396.6 323.0 L369.8 343.5"/>
<path d="M369.8 343.5 L396.6 370.4 M396.6 343.5 L369.8 370.4"/>
<path d="M369.8 370.4 L396.6 397.2 M396.6 370.4 L369.8 397.2"/>
<path d="M369.8 397.2 L396.6 424.1 M396.6 397.2 L369.8 424.1"/>
<path d="M369.8 424.1 L396.6 450.9 M396.6 424.1 L369.8 450.9"/>
<path d="M369.8 450.9 L396.6 477.8 M396.6 450.9 L369.8 477.8"/>
<path d="M369.8 477.8 L396.6 504.6 M396.6 477.8 L369.8 504.6"/>
<path d="M396.6 -5.6 L423.4 21.3 M423.4 -5.6 L396.6 21.3"/>
<path d="M396.6 21.3 L423.4 48.2 M423.4 21.3 L396.6 48.2"/>
<path d="M396.6 48.2 L423.4 75.0 M423.4 48.2 L396.6 75.0"/>
<path d="M396.6 75.0 L423.4 101.9 M423.4 75.0 L396.6 101.9"/>
<path d="M396.6 101.9 L423.4 128.7 M423.4 101.9 L396.6 128.7"/>
<path d="M396.6 128.7 L423.4 155.6 M423.4 128.7 L396.6 155.6"/>
<path d="M396.6 155.6 L423.4 182.4 M423.4 155.6 L396.6 182.4"/>
<path d="M396.6 182.4 L423.4 205.6 M423.4 182.4 L396.6 205.6"/>
<path d="M396.6 205.6 L423.4 229.0 M423.4 205.6 L396.6 229.0"/>
<path d="M396.6 229.0 L423.4 252.6 M423.4 229.0 L396.6 252.6"/>
<path d="M396.6 252.6 L423.4 276.0 M423.4 252.6 L396.6 276.0"/>
<path d="M396.6 276.0 L423.4 299.6 M423.4 276.0 L396.6 299.6"/>
<path d="M396.6 299.6 L423.4 323.0 M423.4 299.6 L396.6 323.0"/>
<path d="M396.6 323.0 L423.4 343.5 M423.4 323.0 L396.6 343.5"/>
<path d="M396.6 343.5 L423.4 370.4 M423.4 343.5 L396.6 370.4"/>
<path d="M396.6 370.4 L423.4 397.2 M423.4 370.4 L396.6 397.2"/>
<path d="M396.6 397.2 L423.4 424.1 M423.4 397.2 L396.6 424.1"/>
<path d="M396.6 424.1 L423.4 450.9 M423.4 424.1 L396.6 450.9"/>
<path d="M396.6 450.9 L423.4 477.8 M423.4 450.9 L396.6 477.8"/>
<path d="M396.6 477.8 L423.4 504.6 M423.4 477.8 L396.6 504.6"/>
<path d="M423.4 -5.6 L450.3 21.3 M450.3 -5.6 L423.4 21.3"/>
<path d="M423.4 21.3 L450.3 48.2 M450.3 21.3 L423.4 48.2"/>
<path d="M423.4 48.2 L450.3 75.0 M450.3 48.2 L423.4 75.0"/>
<path d="M423.4 75.0 L450.3 101.9 M450.3 75.0 L423.4 101.9"/>
<path d="M423.4 101.9 L450.3 128.7 M450.3 101.9 L423.4 128.7"/>
<path d="M423.4 128.7 L450.3 155.6 M450.3 128.7 L423.4 155.6"/>
<path d="M423.4 155.6 L450.3 182.4 M450.3 155.6 L423.4 182.4"/>
<path d="M423.4 182.4 L450.3 205.6 M450.3 182.4 L423.4 205.6"/>
<path d="M423.4 205.6 L450.3 229.0 M450.3 205.6 L423.4 229.0"/>
<path d="M423.4 229.0 L450.3 252.6 M450.3 229.0 L423.4 252.6"/>
<path d="M423.4 252.6 L450.3 276.0 M450.3 252.6 L423.4 276.0"/>
<path d="M423.4 276.0 L450.3 299.6 M450.3 276.0 L423.4 299.6"/>
<path d="M423.4 299.6 L450.3 323.0 M450.3 299.6 L423.4 323.0"/>
<path d="M423.4 323.0 L450.3 343.5 M450.3 323.0 L423.4 343.5"/>
<path d="M423.4 343.5 L450.3 370.4 M450.3 343.5 L423.4 370.4"/>
<path d="M423.4 370.4 L450.3 397.2 M450.3 370.4 L423.4 397.2"/>
<path d="M423.4 397.2 L450.3 424.1 M450.3 397.2 L423.4 424.1"/>
<path d="M423.4 424.1 L450.3 450.9 M450.3 424.1 L423.4 450.9"/>
<path d="M423.4 450.9 L450.3 477.8 M450.3 450.9 L423.4 477.8"/>
<path d="M423.4 477.8 L450.3 504.6 M450.3 477.8 L423.4 504.6"/>
<path d="M450.3 -5.6 L477.2 21.3 M477.2 -5.6 L450.3 21.3"/>
<path d="M450.3 21.3 L477.2 48.2 M477.2 21.3 L450.3 48.2"/>
<path d="M450.3 48.2 L477.2 75.0 M477.2 48.2 L450.3 75.0"/>
<path d="M450.3 75.0 L477.2 101.9 M477.2 75.0 L450.3 101.9"/>
<path d="M450.3 101.9 L477.2 128.7 M477.2 101.9 L450.3 128.7"/>
<path d="M450.3 128.7 L477.2 155.6 M477.2 128.7 L450.3 155.6"/>
<path d="M450.3 155.6 L477.2 182.4 M477.2 155.6 L450.3 182.4"/>
<path d="M450.3 182.4 L477.2 205.6 M477.2 182.4 L450.3 205.6"/>
<path d="M450.3 205.6 L477.2 229.0 M477.2 205.6 L450.3 229.0"/>
<path d="M450.3 229.0 L477.2 252.6 M477.2 229.0 L450.3 252.6"/>
<path d="M450.3 252.6 L477.2 276.0 M477.2 252.6 L450.3 276.0"/>
<path d="M450.3 276.0 L477.2 299.6 M477.2 276.0 L450.3 299.6"/>
<path d="M450.3 299.6 L477.2 323.0 M477.2 299.6 L450.3 323.0"/>
<path d="M450.3 323.0 L477.2 343.5 M477.2 323.0 L450.3 343.5"/>
<path d="M450.3 343.5 L477.2 370.4 M477.2 343.5 L450.3 370.4"/>
<path d="M450.3 370.4 L477.2 397.2 M477.2 370.4 L450.3 397.2"/>
<path d="M450.3 397.2 L477.2 424.1 M477.2 397.2 L450.3 424.1"/>
<path d="M450.3 424.1 L477.2 450.9 M477.2 424.1 L450.3 450.9"/>
<path d="M450.3 450.9 L477.2 477.8 M477.2 450.9 L450.3 477.8"/>
<path d="M450.3 477.8 L477.2 504.6 M477.2 477.8 L450.3 504.6"/>
<path d="M477.2 -5.6 L504.0 21.3 M504.0 -5.6 L477.2 21.3"/>
<path d="M477.2 21.3 L504.0 48.2 M504.0 21.3 L477.2 48.2"/>
<path d="M477.2 48.2 L504.0 75.0 M504.0 48.2 L477.2 75.0"/>
<path d="M477.2 75.0 L504.0 101.9 M504.0 75.0 L477.2 101.9"/>
<path d="M477.2 101.9 L504.0 128.7 M504.0 101.9 L477.2 128.7"/>
<path d="M477.2 128.7 L504.0 155.6 M504.0 128.7 L477.2 155.6"/>
<path d="M477.2 155.6 L504.0 182.4 M504.0 155.6 L477.2 182.4"/>
<path d="M477.2 182.4 L504.0 205.6 M504.0 182.4 L477.2 205.6"/>
<path d="M477.2 205.6 L504.0 229.0 M504.0 205.6 L477.2 229.0"/>
<path d="M477.2 229.0 L504.0 252.6 M504.0 229.0 L477.2 252.6"/>
<path d="M477.2 252.6 L504.0 276.0 M504.0 252.6 L477.2 276.0"/>
<path d="M477.2 276.0 L504.0 299.6 M504.0 276.0 L477.2 299.6"/>
<path d="M477.2 299.6 L504.0 323.0 M504.0 299.6 L477.2 323.0"/>
<path d="M477.2 323.0 L504.0 343.5 M504.0 323.0 L477.2 343.5"/>
<path d="M477.2 343.5 L504.0 370.4 M504.0 343.5 L477.2 370.4"/>
<path d="M477.2 370.4 L504.0 397.2 M504.0 370.4 L477.2 397.2"/>
<path d="M477.2 397.2 L504.0 424.1 M504.0 397.2 L477.2 424.1"/>
<path d="M477.2 424.1 L504.0 450.9 M504.0 424.1 L477.2 450.9"/>
<path d="M477.2 450.9 L504.0 477.8 M504.0 450.9 L477.2 477.8"/>
<path d="M477.2 477.8 L504.0 504.6 M504.0 477.8 L477.2 504.6"/>
<path d="M-6.2 323.0 L20.7 343.5 M20.7 323.0 L-6.2 343.5"/>
<path d="M-6.2 343.5 L20.7 370.4 M20.7 343.5 L-6.2 370.4"/>
<path d="M-6.2 370.4 L20.7 397.2 M20.7 370.4 L-6.2 397.2"/>
<path d="M-6.2 397.2 L20.7 424.1 M20.7 397.2 L-6.2 424.1"/>
<path d="M-6.2 424.1 L20.7 450.9 M20.7 424.1 L-6.2 450.9"/>
<path d="M-6.2 450.9 L20.7 477.8 M20.7 450.9 L-6.2 477.8"/>
<path d="M-6.2 477.8 L20.7 504.6 M20.7 477.8 L-6.2 504.6"/>
<path d="M20.7 323.0 L47.5 343.5 M47.5 323.0 L20.7 343.5"/>
<path d="M20.7 343.5 L47.5 370.4 M47.5 343.5 L20.7 370.4"/>
<path d="M20.7 370.4 L47.5 397.2 M47.5 370.4 L20.7 397.2"/>
<path d="M20.7 397.2 L47.5 424.1 M47.5 397.2 L20.7 424.1"/>
<path d="M20.7 424.1 L47.5 450.9 M47.5 424.1 L20.7 450.9"/>
<path d="M20.7 450.9 L47.5 477.8 M47.5 450.9 L20.7 477.8"/>
<path d="M20.7 477.8 L47.5 504.6 M47.5 477.8 L20.7 504.6"/>
<path d="M47.5 323.0 L74.4 343.5 M74.4 323.0 L47.5 343.5"/>
<path d="M47.5 343.5 L74.4 370.4 M74.4 343.5 L47.5 370.4"/>
<path d="M47.5 370.4 L74.4 397.2 M74.4 370.4 L47.5 397.2"/>
<path d="M47.5 397.2 L74.4 424.1 M74.4 397.2 L47.5 424.1"/>
<path d="M47.5 424.1 L74.4 450.9 M74.4 424.1 L47.5 450.9"/>
<path d="M47.5 450.9 L74.4 477.8 M74.4 450.9 L47.5 477.8"/>
<path d="M47.5 477.8 L74.4 504.6 M74.4 477.8 L47.5 504.6"/>
<path d="M74.4 323.0 L101.3 343.5 M101.3 323.0 L74.4 343.5"/>
<path d="M74.4 343.5 L101.3 370.4 M101.3 343.5 L74.4 370.4"/>
<path d="M74.4 370.4 L101.3 397.2 M101.3 370.4 L74.4 397.2"/>
<path d="M74.4 397.2 L101.3 424.1 M101.3 397.2 L74.4 424.1"/>
<path d="M74.4 424.1 L101.3 450.9 M101.3 424.1 L74.4 450.9"/>
<path d="M74.4 450.9 L101.3 477.8 M101.3 450.9 L74.4 477.8"/>
<path d="M74.4 477.8 L101.3 504.6 M101.3 477.8 L74.4 504.6"/>
<path d="M101.3 323.0 L128.1 343.5 M128.1 323.0 L101.3 343.5"/>
<path d="M101.3 343.5 L128.1 370.4 M128.1 343.5 L101.3 370.4"/>
<path d="M101.3 370.4 L128.1 397.2 M128.1 370.4 L101.3 397.2"/>
<path d="M101.3 397.2 L128.1 424.1 M128.1 397.2 L101.3 424.1"/>
<path d="M101.3 424.1 L128.1 450.9 M128.1 424.1 L101.3 450.9"/>
<path d="M101.3 450.9 L128.1 477.8 M128.1 450.9 L101.3 477.8"/>
<path d="M101.3 477.8 L128.1 504.6 M128.1 477.8 L101.3 504.6"/>
<path d="M128.1 323.0 L154.9 343.5 M154.9 323.0 L128.1 343.5"/>
<path d="M128.1 343.5 L154.9 370.4 M154.9 343.5 L128.1 370.4"/>
<path d="M128.1 370.4 L154.9 397.2 M154.9 370.4 L128.1 397.2"/>
<path d="M128.1 397.2 L154.9 424.1 M154.9 397.2 L128.1 424.1"/>
<path d="M128.1 424.1 L154.9 450.9 M154.9 424.1 L128.1 450.9"/>
<path d="M128.1 450.9 L154.9 477.8 M154.9 450.9 L128.1 477.8"/>
<path d="M128.1 477.8 L154.9 504.6 M154.9 477.8 L128.1 504.6"/>
<path d="M154.9 323.0 L181.8 343.5 M181.8 323.0 L154.9 343.5"/>
<path d="M154.9 343.5 L181.8 370.4 M181.8 343.5 L154.9 370.4"/>
<path d="M154.9 370.4 L181.8 397.2 M181.8 370.4 L154.9 397.2"/>
<path d="M154.9 397.2 L181.8 424.1 M181.8 397.2 L154.9 424.1"/>
<path d="M154.9 424.1 L181.8 450.9 M181.8 424.1 L154.9 450.9"/>
<path d="M154.9 450.9 L181.8 477.8 M181.8 450.9 L154.9 477.8"/>
<path d="M154.9 477.8 L181.8 504.6 M181.8 477.8 L154.9 504.6"/>
</g>
<g stroke="#001428" stroke-opacity="0.6" stroke-width="0.95" fill="none">
<line x1="20.7" y1="1.0" x2="20.7" y2="195.0"/>
<line x1="20.7" y1="323.3" x2="20.7" y2="524.7"/>
<line x1="47.5" y1="1.0" x2="47.5" y2="195.0"/>
<line x1="47.5" y1="323.3" x2="47.5" y2="524.7"/>
<line x1="74.4" y1="1.0" x2="74.4" y2="195.0"/>
<line x1="74.4" y1="323.3" x2="74.4" y2="524.7"/>
<line x1="101.3" y1="1.0" x2="101.3" y2="195.0"/>
<line x1="101.3" y1="323.3" x2="101.3" y2="524.7"/>
<line x1="128.1" y1="1.0" x2="128.1" y2="195.0"/>
<line x1="128.1" y1="323.3" x2="128.1" y2="524.7"/>
<line x1="154.9" y1="1.0" x2="154.9" y2="195.0"/>
<line x1="154.9" y1="323.3" x2="154.9" y2="524.7"/>
<line x1="181.8" y1="1.0" x2="181.8" y2="524.7"/>
<line x1="208.7" y1="1.0" x2="208.7" y2="524.7"/>
<line x1="235.5" y1="1.0" x2="235.5" y2="524.7"/>
<line x1="262.4" y1="1.0" x2="262.4" y2="524.7"/>
<line x1="289.2" y1="1.0" x2="289.2" y2="524.7"/>
<line x1="316.1" y1="1.0" x2="316.1" y2="524.7"/>
<line x1="342.9" y1="1.0" x2="342.9" y2="524.7"/>
<line x1="369.8" y1="1.0" x2="369.8" y2="524.7"/>
<line x1="396.6" y1="1.0" x2="396.6" y2="524.7"/>
<line x1="423.4" y1="1.0" x2="423.4" y2="524.7"/>
<line x1="450.3" y1="1.0" x2="450.3" y2="524.7"/>
<line x1="477.2" y1="1.0" x2="477.2" y2="524.7"/>
<line x1="504.0" y1="1.0" x2="504.0" y2="524.7"/>
<line x1="182.0" y1="21.3" x2="524.0" y2="21.3"/>
<line x1="182.0" y1="48.2" x2="524.0" y2="48.2"/>
<line x1="182.0" y1="75.0" x2="524.0" y2="75.0"/>
<line x1="182.0" y1="101.9" x2="524.0" y2="101.9"/>
<line x1="182.0" y1="128.7" x2="524.0" y2="128.7"/>
<line x1="182.0" y1="155.6" x2="524.0" y2="155.6"/>
<line x1="182.0" y1="182.4" x2="524.0" y2="182.4"/>
<line x1="182.0" y1="205.6" x2="524.0" y2="205.6"/>
<line x1="182.0" y1="229.0" x2="524.0" y2="229.0"/>
<line x1="182.0" y1="252.6" x2="524.0" y2="252.6"/>
<line x1="182.0" y1="276.0" x2="524.0" y2="276.0"/>
<line x1="182.0" y1="299.6" x2="524.0" y2="299.6"/>
<line x1="182.0" y1="323.0" x2="524.0" y2="323.0"/>
<line x1="182.0" y1="343.5" x2="524.0" y2="343.5"/>
<line x1="2.0" y1="343.5" x2="182.0" y2="343.5"/>
<line x1="182.0" y1="370.4" x2="524.0" y2="370.4"/>
<line x1="2.0" y1="370.4" x2="182.0" y2="370.4"/>
<line x1="182.0" y1="397.2" x2="524.0" y2="397.2"/>
<line x1="2.0" y1="397.2" x2="182.0" y2="397.2"/>
<line x1="182.0" y1="424.1" x2="524.0" y2="424.1"/>
<line x1="2.0" y1="424.1" x2="182.0" y2="424.1"/>
<line x1="182.0" y1="450.9" x2="524.0" y2="450.9"/>
<line x1="2.0" y1="450.9" x2="182.0" y2="450.9"/>
<line x1="182.0" y1="477.8" x2="524.0" y2="477.8"/>
<line x1="2.0" y1="477.8" x2="182.0" y2="477.8"/>
<line x1="182.0" y1="504.6" x2="524.0" y2="504.6"/>
<line x1="2.0" y1="504.6" x2="182.0" y2="504.6"/>
<line x1="0.0" y1="21.3" x2="182.0" y2="21.3"/>
<line x1="0.0" y1="47.1" x2="182.0" y2="47.1"/>
<line x1="0.0" y1="72.9" x2="182.0" y2="72.9"/>
<line x1="0.0" y1="98.7" x2="182.0" y2="98.7"/>
<line x1="0.0" y1="124.5" x2="182.0" y2="124.5"/>
<line x1="0.0" y1="150.3" x2="182.0" y2="150.3"/>
<line x1="0.0" y1="176.1" x2="182.0" y2="176.1"/>
<line x1="14.0" y1="1.0" x2="14.0" y2="47.1"/>
<line x1="27.4" y1="1.0" x2="27.4" y2="47.1"/>
<line x1="0.0" y1="14.6" x2="47.5" y2="14.6"/>
<line x1="0.0" y1="28.0" x2="47.5" y2="28.0"/>
<line x1="175.3" y1="1.0" x2="175.3" y2="47.8"/>
<line x1="188.7" y1="1.0" x2="188.7" y2="47.8"/>
<line x1="155.3" y1="14.6" x2="208.8" y2="14.6"/>
<line x1="155.3" y1="28.0" x2="208.8" y2="28.0"/>
<line x1="336.4" y1="1.0" x2="336.4" y2="48.2"/>
<line x1="349.8" y1="1.0" x2="349.8" y2="48.2"/>
<line x1="316.3" y1="14.6" x2="370.0" y2="14.6"/>
<line x1="316.3" y1="28.0" x2="370.0" y2="28.0"/>
<line x1="497.5" y1="1.0" x2="497.5" y2="48.2"/>
<line x1="510.9" y1="1.0" x2="510.9" y2="48.2"/>
<line x1="477.4" y1="14.6" x2="524.0" y2="14.6"/>
<line x1="477.4" y1="28.0" x2="524.0" y2="28.0"/>
<line x1="13.9" y1="150.3" x2="13.9" y2="195.0"/>
<line x1="27.4" y1="150.3" x2="27.4" y2="195.0"/>
<line x1="0.0" y1="189.2" x2="47.6" y2="189.2"/>
<line x1="0.0" y1="182.3" x2="47.6" y2="182.3"/>
<line x1="155.3" y1="182.3" x2="182.0" y2="182.3"/>
<line x1="182.0" y1="175.6" x2="208.8" y2="175.6"/>
<line x1="175.3" y1="150.3" x2="175.3" y2="195.0"/>
<line x1="188.7" y1="155.6" x2="188.7" y2="205.6"/>
<line x1="155.3" y1="182.6" x2="208.8" y2="182.6"/>
<line x1="182.0" y1="189.1" x2="208.8" y2="189.1"/>
<line x1="155.3" y1="189.1" x2="182.0" y2="189.1"/>
<line x1="175.3" y1="323.0" x2="175.3" y2="370.4"/>
<line x1="188.7" y1="323.0" x2="188.7" y2="370.4"/>
<line x1="155.3" y1="336.8" x2="208.8" y2="336.8"/>
<line x1="155.3" y1="350.2" x2="208.8" y2="350.2"/>
<line x1="14.0" y1="323.3" x2="14.0" y2="370.4"/>
<line x1="27.4" y1="323.3" x2="27.4" y2="370.4"/>
<line x1="2.0" y1="336.8" x2="47.5" y2="336.8"/>
<line x1="2.0" y1="350.2" x2="47.5" y2="350.2"/>
<line x1="14.0" y1="477.8" x2="14.0" y2="524.7"/>
<line x1="27.4" y1="477.8" x2="27.4" y2="524.7"/>
<line x1="2.0" y1="497.9" x2="47.5" y2="497.9"/>
<line x1="2.0" y1="511.3" x2="47.5" y2="511.3"/>
<line x1="175.3" y1="477.8" x2="175.3" y2="524.7"/>
<line x1="188.7" y1="477.8" x2="188.7" y2="524.7"/>
<line x1="155.3" y1="497.9" x2="208.8" y2="497.9"/>
<line x1="155.3" y1="511.3" x2="208.8" y2="511.3"/>
</g>
<line x1="47.6" y1="182.3" x2="155.3" y2="182.3" stroke="#506070" stroke-opacity="0.45"/>
</g></svg>
<div id="dlg">
 <div id="title"><div id="icon"><span>S</span></div><div id="ttext">Soil Pressures</div>
  <svg class="wb" style="left:479px" width="145" height="30"><path d="M27 14.5 H37" stroke="#000" stroke-width="1"/><rect x="72.5" y="9.5" width="9" height="9" fill="none" stroke="#000"/><path d="M118.3 9.3 L127.7 18.7 M127.7 9.3 L118.3 18.7" stroke="#000" stroke-width="1.1"/></svg>
 </div>
 <div id="menu"><span style="left:15px">File</span><span style="left:52px">Edit</span><span style="left:91px">Format-Filter-Sort</span><span style="left:204px;color:#8e8e8e">Select</span><span style="left:255px">Options</span></div>
 <div class="lb" style="left:11px;top:60px">Units:</div><div class="lb" style="left:43px;top:60px">As Noted</div>
 <div class="lb" style="left:128px;top:60px">Hidden Columns:</div><div class="lb" style="left:214px;top:60px">No</div>
 <div class="lb" style="left:268px;top:60px">Sort:</div><div class="lb" style="left:296px;top:60px">None</div>
 <div class="lb" style="left:11px;top:77px">Filter:</div><div class="lb" style="left:43px;top:77px">None</div>
 <div id="combo"><span>Soil Pressures</span><svg width="12" height="8" style="position:absolute;right:2px;top:7px"><path d="M2 1.5 L6 5.5 L10 1.5" fill="none" stroke="#444" stroke-width="1.2"/></svg></div>
<div id="tbl">
<div class="hc" style="left:25px;width:84px;padding-top:11px">Unique Name</div>
<div class="hc" style="left:110px;width:67px;padding-top:4px">Shell<br>Element</div>
<div class="hc" style="left:178px;width:59px;padding-top:11px">Joint</div>
<div class="hc" style="left:238px;width:79px;padding-top:4px">Output<br>Case</div>
<div class="hc" style="left:318px;width:79px;padding-top:11px">Case Type</div>
<div class="hc" style="left:398px;width:67px;padding-top:4px">Soil<br>Pressure<br>lb/ft²</div>
<div class="hc" style="left:466px;width:63px;padding-top:11px">Global X<br>in</div>
<div class="hc" style="left:530px;width:65px;padding-top:11px">Global Y<br>in</div>
<div class="hv" style="left:109px"></div>
<div class="hv" style="left:177px"></div>
<div class="hv" style="left:237px"></div>
<div class="hv" style="left:317px"></div>
<div class="hv" style="left:397px"></div>
<div class="hv" style="left:465px"></div>
<div class="hv" style="left:529px"></div>
<div class="hl" style="top:49px"></div>
<div class="c center" style="left:25px;top:50px;width:84px">LOAD1</div>
<div class="c center" style="left:110px;top:50px;width:67px">LOAD1-1</div>
<div class="c center" style="left:178px;top:50px;width:59px">~397</div>
<div class="c center" style="left:238px;top:50px;width:79px">Dead</div>
<div class="c center" style="left:318px;top:50px;width:79px">LinStatic</div>
<div class="c right" style="left:398px;top:50px;width:67px">-2364.48</div>
<div class="c right" style="left:466px;top:50px;width:63px">-12</div>
<div class="c right" style="left:530px;top:50px;width:65px">0</div>
<div class="hl" style="top:71px"></div>
<div class="hl2" style="top:71px"></div>
<div class="c center" style="left:25px;top:72px;width:84px">LOAD1</div>
<div class="c center" style="left:110px;top:72px;width:67px">LOAD1-1</div>
<div class="c center" style="left:178px;top:72px;width:59px">69</div>
<div class="c center" style="left:238px;top:72px;width:79px">Dead</div>
<div class="c center" style="left:318px;top:72px;width:79px">LinStatic</div>
<div class="c right" style="left:398px;top:72px;width:67px">-2236.78</div>
<div class="c right" style="left:466px;top:72px;width:63px">0</div>
<div class="c right" style="left:530px;top:72px;width:65px">0</div>
<div class="hl" style="top:93px"></div>
<div class="hl2" style="top:93px"></div>
<div class="c center" style="left:25px;top:94px;width:84px">LOAD1</div>
<div class="c center" style="left:110px;top:94px;width:67px">LOAD1-1</div>
<div class="c center" style="left:178px;top:94px;width:59px">~402</div>
<div class="c center" style="left:238px;top:94px;width:79px">Dead</div>
<div class="c center" style="left:318px;top:94px;width:79px">LinStatic</div>
<div class="c right" style="left:398px;top:94px;width:67px">-2108.99</div>
<div class="c right" style="left:466px;top:94px;width:63px">0</div>
<div class="c right" style="left:530px;top:94px;width:65px">12</div>
<div class="hl" style="top:115px"></div>
<div class="hl2" style="top:115px"></div>
<div class="c center" style="left:25px;top:116px;width:84px">LOAD1</div>
<div class="c center" style="left:110px;top:116px;width:67px">LOAD1-1</div>
<div class="c center" style="left:178px;top:116px;width:59px">8</div>
<div class="c center" style="left:238px;top:116px;width:79px">Dead</div>
<div class="c center" style="left:318px;top:116px;width:79px">LinStatic</div>
<div class="c right" style="left:398px;top:116px;width:67px">-2236.42</div>
<div class="c right" style="left:466px;top:116px;width:63px">-12</div>
<div class="c right" style="left:530px;top:116px;width:65px">12</div>
<div class="hl" style="top:137px"></div>
<div class="hl2" style="top:137px"></div>
<div class="c center" style="left:25px;top:138px;width:84px">LOAD1</div>
<div class="c center" style="left:110px;top:138px;width:67px">LOAD1-1</div>
<div class="c center" style="left:178px;top:138px;width:59px">~397</div>
<div class="c center" style="left:238px;top:138px;width:79px">Live</div>
<div class="c center" style="left:318px;top:138px;width:79px">LinStatic</div>
<div class="c right" style="left:398px;top:138px;width:67px">-1038.82</div>
<div class="c right" style="left:466px;top:138px;width:63px">-12</div>
<div class="c right" style="left:530px;top:138px;width:65px">0</div>
<div class="hl" style="top:159px"></div>
<div class="hl2" style="top:159px"></div>
<div class="c center" style="left:25px;top:160px;width:84px">LOAD1</div>
<div class="c center" style="left:110px;top:160px;width:67px">LOAD1-1</div>
<div class="c center" style="left:178px;top:160px;width:59px">69</div>
<div class="c center" style="left:238px;top:160px;width:79px">Live</div>
<div class="c center" style="left:318px;top:160px;width:79px">LinStatic</div>
<div class="c right" style="left:398px;top:160px;width:67px">-974.52</div>
<div class="c right" style="left:466px;top:160px;width:63px">0</div>
<div class="c right" style="left:530px;top:160px;width:65px">0</div>
<div class="hl" style="top:181px"></div>
<div class="hl2" style="top:181px"></div>
<div class="c center" style="left:25px;top:182px;width:84px">LOAD1</div>
<div class="c center" style="left:110px;top:182px;width:67px">LOAD1-1</div>
<div class="c center" style="left:178px;top:182px;width:59px">~402</div>
<div class="c center" style="left:238px;top:182px;width:79px">Live</div>
<div class="c center" style="left:318px;top:182px;width:79px">LinStatic</div>
<div class="c right" style="left:398px;top:182px;width:67px">-910.25</div>
<div class="c right" style="left:466px;top:182px;width:63px">0</div>
<div class="c right" style="left:530px;top:182px;width:65px">12</div>
<div class="hl" style="top:203px"></div>
<div class="hl2" style="top:203px"></div>
<div class="c center" style="left:25px;top:204px;width:84px">LOAD1</div>
<div class="c center" style="left:110px;top:204px;width:67px">LOAD1-1</div>
<div class="c center" style="left:178px;top:204px;width:59px">8</div>
<div class="c center" style="left:238px;top:204px;width:79px">Live</div>
<div class="c center" style="left:318px;top:204px;width:79px">LinStatic</div>
<div class="c right" style="left:398px;top:204px;width:67px">-974.41</div>
<div class="c right" style="left:466px;top:204px;width:63px">-12</div>
<div class="c right" style="left:530px;top:204px;width:65px">12</div>
<div class="hl" style="top:225px"></div>
<div class="hl2" style="top:225px"></div>
<div class="c center" style="left:25px;top:226px;width:84px">LOAD1</div>
<div class="c center" style="left:110px;top:226px;width:67px">LOAD1-1</div>
<div class="c center" style="left:178px;top:226px;width:59px">~397</div>
<div class="c center" style="left:238px;top:226px;width:79px">DConS1</div>
<div class="c center" style="left:318px;top:226px;width:79px">Combination</div>
<div class="c right" style="left:398px;top:226px;width:67px">-3310.27</div>
<div class="c right" style="left:466px;top:226px;width:63px">-12</div>
<div class="c right" style="left:530px;top:226px;width:65px">0</div>
<div class="hl" style="top:247px"></div>
<div class="hl2" style="top:247px"></div>
<div class="c center" style="left:25px;top:248px;width:84px">LOAD1</div>
<div class="c center" style="left:110px;top:248px;width:67px">LOAD1-1</div>
<div class="c center" style="left:178px;top:248px;width:59px">69</div>
<div class="c center" style="left:238px;top:248px;width:79px">DConS1</div>
<div class="c center" style="left:318px;top:248px;width:79px">Combination</div>
<div class="c right" style="left:398px;top:248px;width:67px">-3131.49</div>
<div class="c right" style="left:466px;top:248px;width:63px">0</div>
<div class="c right" style="left:530px;top:248px;width:65px">0</div>
<div class="hl" style="top:269px"></div>
<div class="hl2" style="top:269px"></div>
<div class="c center" style="left:25px;top:270px;width:84px">LOAD1</div>
<div class="c center" style="left:110px;top:270px;width:67px">LOAD1-1</div>
<div class="c center" style="left:178px;top:270px;width:59px">~402</div>
<div class="c center" style="left:238px;top:270px;width:79px">DConS1</div>
<div class="c center" style="left:318px;top:270px;width:79px">Combination</div>
<div class="c right" style="left:398px;top:270px;width:67px">-2952.59</div>
<div class="c right" style="left:466px;top:270px;width:63px">0</div>
<div class="c right" style="left:530px;top:270px;width:65px">12</div>
<div class="hl" style="top:291px"></div>
<div class="hl2" style="top:291px"></div>
<div class="c center" style="left:25px;top:292px;width:84px">LOAD1</div>
<div class="c center" style="left:110px;top:292px;width:67px">LOAD1-1</div>
<div class="c center" style="left:178px;top:292px;width:59px">8</div>
<div class="c center" style="left:238px;top:292px;width:79px">DConS1</div>
<div class="c center" style="left:318px;top:292px;width:79px">Combination</div>
<div class="c right" style="left:398px;top:292px;width:67px">-3130.99</div>
<div class="c right" style="left:466px;top:292px;width:63px">-12</div>
<div class="c right" style="left:530px;top:292px;width:65px">12</div>
<div class="hl" style="top:313px"></div>
<div class="hl2" style="top:313px"></div>
<div class="c center" style="left:25px;top:314px;width:84px">LOAD1</div>
<div class="c center" style="left:110px;top:314px;width:67px">LOAD1-1</div>
<div class="c center" style="left:178px;top:314px;width:59px">~397</div>
<div class="c center" style="left:238px;top:314px;width:79px">DConS2</div>
<div class="c center" style="left:318px;top:314px;width:79px">Combination</div>
<div class="c right" style="left:398px;top:314px;width:67px">-4499.49</div>
<div class="c right" style="left:466px;top:314px;width:63px">-12</div>
<div class="c right" style="left:530px;top:314px;width:65px">0</div>
<div class="hl" style="top:335px"></div>
<div class="hl2" style="top:335px"></div>
<div class="c center" style="left:25px;top:336px;width:84px">LOAD1</div>
<div class="c center" style="left:110px;top:336px;width:67px">LOAD1-1</div>
<div class="c center" style="left:178px;top:336px;width:59px">69</div>
<div class="c center" style="left:238px;top:336px;width:79px">DConS2</div>
<div class="c center" style="left:318px;top:336px;width:79px">Combination</div>
<div class="c right" style="left:398px;top:336px;width:67px">-4243.37</div>
<div class="c right" style="left:466px;top:336px;width:63px">0</div>
<div class="c right" style="left:530px;top:336px;width:65px">0</div>
<div class="hl" style="top:357px"></div>
<div class="hl2" style="top:357px"></div>
<div class="c center" style="left:25px;top:358px;width:84px">LOAD1</div>
<div class="c center" style="left:110px;top:358px;width:67px">LOAD1-1</div>
<div class="c center" style="left:178px;top:358px;width:59px"></div>
<div class="c center" style="left:238px;top:358px;width:79px"></div>
<div class="c center" style="left:318px;top:358px;width:79px"></div>
<div class="c right" style="left:398px;top:358px;width:67px"></div>
<div class="c right" style="left:466px;top:358px;width:63px"></div>
<div class="c right" style="left:530px;top:358px;width:65px"></div>
<div class="v" style="left:109px"></div>
<div class="v" style="left:177px"></div>
<div class="v" style="left:237px"></div>
<div class="v" style="left:317px"></div>
<div class="v" style="left:397px"></div>
<div class="v" style="left:465px"></div>
<div class="v" style="left:529px"></div>
<div class="v0" style="left:24px"></div>
<svg id="arrow" width="24" height="80"><polygon points="7,56.8 12.4,61.5 7,66.2" fill="#3c3c3c"/></svg>
<div id="sb"><svg width="17" height="359" style="position:absolute;left:0;top:0"><path d="M5.2 11.2 L8.5 7.6 L11.8 11.2" fill="none" stroke="#555" stroke-width="2"/><rect x="1" y="17" width="15" height="17" fill="#c8c8c8"/><path d="M5.2 348.2 L8.5 351.8 L11.8 348.2" fill="none" stroke="#555" stroke-width="2"/><rect x="16" y="0" width="1" height="359" fill="#fff"/><rect x="0" y="358" width="17" height="1" fill="#fff"/></svg></div>
</div>
 <div class="lb" style="left:12px;top:474px">Record:</div>
 <div class="btn nav" style="left:62px;top:470px;width:34px">&lt;&lt;</div>
 <div class="btn nav" style="left:99px;top:470px;width:27px">&lt;</div>
 <div style="position:absolute;left:129px;top:473px;width:59px;height:13px;background:#fff;font-size:12px;line-height:13px;padding-top:1px;text-align:center">1</div>
 <div class="btn nav" style="left:190px;top:470px;width:27px">&gt;</div>
 <div class="btn nav" style="left:219px;top:470px;width:34px">&gt;&gt;</div>
 <div class="lb" style="left:259px;top:474px">of 9536</div>
 <div class="btn" style="left:371px;top:470px;width:112px">Add Tables...</div>
 <div class="btn" style="left:527px;top:470px;width:71px;border:2px solid #0078d7;line-height:17px">Done</div>
 <svg width="12" height="12" style="position:absolute;right:1px;bottom:1px"><g fill="#bfbfbf"><rect x="9" y="9" width="2" height="2"/><rect x="6" y="9" width="2" height="2"/><rect x="3" y="9" width="2" height="2"/><rect x="9" y="6" width="2" height="2"/><rect x="6" y="6" width="2" height="2"/><rect x="9" y="3" width="2" height="2"/></g></svg>
</div>
</body></html>
